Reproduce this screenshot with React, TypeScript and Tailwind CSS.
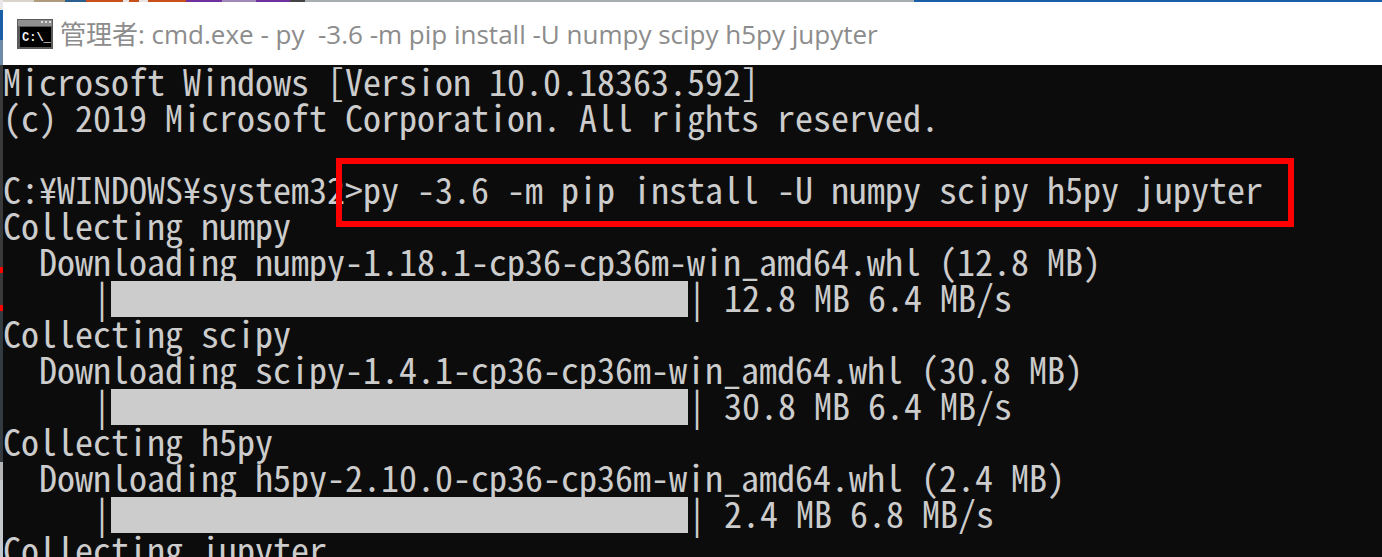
const lines = [
  { t: "Microsoft Windows [Version 10.0.18363.592]" },
  { t: "(c) 2019 Microsoft Corporation. All rights reserved." },
  { t: "" },
  { t: "C:¥WINDOWS¥system32>py -3.6 -m pip install -U numpy scipy h5py jupyter" },
  { t: "Collecting numpy" },
  { t: "  Downloading numpy-1.18.1-cp36-cp36m-win_amd64.whl (12.8 MB)" },
  { t: "     |", bar: "| 12.8 MB 6.4 MB/s" },
  { t: "Collecting scipy" },
  { t: "  Downloading scipy-1.4.1-cp36-cp36m-win_amd64.whl (30.8 MB)" },
  { t: "     |", bar: "| 30.8 MB 6.4 MB/s" },
  { t: "Collecting h5py" },
  { t: "  Downloading h5py-2.10.0-cp36-cp36m-win_amd64.whl (2.4 MB)" },
  { t: "     |", bar: "| 2.4 MB 6.8 MB/s" },
  { t: "Collecting jupyter" },
];

export default function App() {
  return (
    <div className="relative flex h-[557px] w-[1382px] flex-col overflow-hidden bg-[#0c0c0c]">
      {/* bit of desktop showing behind the window */}
      <div className="flex h-[2px] shrink-0">
        <div className="w-[34px] bg-[#d8d4cc]" />
        <div className="w-[31px] bg-[#b09a7c]" />
        <div className="w-[21px] bg-[#2a5f8f]" />
        <div className="w-[37px] bg-[#c8501c]" />
        <div className="w-[6px] bg-[#e8e4e0]" />
        <div className="w-[10px] bg-[#c8501c]" />
        <div className="w-[9px] bg-[#e8e4e0]" />
        <div className="w-[38px] bg-[#c8501c]" />
        <div className="w-[36px] bg-[#7030a0]" />
        <div className="w-[34px] bg-[#a088b8]" />
        <div className="w-[34px] bg-[#7030a0]" />
        <div className="w-[15px] bg-[#444444]" />
        <div className="w-[609px] bg-[#a8adb0]" />
        <div className="flex-1 bg-[#1b5ea8]" />
      </div>
      <div className="flex h-[63px] shrink-0 items-center gap-[7px] bg-white pl-[17px]">
        <svg width="36" height="30" viewBox="0 0 36 30">
          <rect width="36" height="30" fill="#5a5a5a" />
          <rect x="1" y="1" width="34" height="6" fill="#8f8f8f" />
          <rect x="24" y="2" width="2" height="2" fill="#dddddd" />
          <rect x="28" y="2" width="2" height="2" fill="#dddddd" />
          <rect x="32" y="2" width="2" height="2" fill="#dddddd" />
          <rect x="3" y="8" width="31" height="20" fill="#000" />
          <text x="5" y="22" fill="#eee" fontSize="12" fontFamily="Liberation Mono, monospace" fontWeight="700">C:\_</text>
        </svg>
        <span className="whitespace-pre pt-[1px] font-['Open_Sans','Noto_Sans_CJK_JP',sans-serif] text-[26px] text-[#8c8c8c]">管理者: cmd.exe - py  -3.6 -m pip install -U numpy scipy h5py jupyter</span>
      </div>
      <div className="whitespace-pre pl-[3px] font-['Noto_Sans_Mono_CJK_JP','Liberation_Mono',monospace] text-[36px] leading-[30px] text-[#cccccc]">
        {lines.map((l, i) => (
          <div key={i} className="flex h-[36px]">
            <span>{l.t}</span>
            {l.bar && <span className="h-[36px] w-[577px] bg-[#cccccc]" />}
            {l.bar && <span>{l.bar}</span>}
          </div>
        ))}
      </div>
      {/* left edge: whatever sits behind the window */}
      <div className="absolute left-0 top-0 flex h-full w-[3px] flex-col">
        <div className="h-[10px] bg-[#e8e8e8]" />
        <div className="h-[30px] bg-[#1b5ea8]" />
        <div className="h-[25px] bg-[#6d8aa8]" />
        <div className="h-[202px] bg-[#3a3a3a]" />
        <div className="h-[6px] bg-[#ff0000]" />
        <div className="h-[32px] bg-[#3a3a3a]" />
        <div className="h-[6px] bg-[#ff0000]" />
        <div className="h-[151px] bg-[#333a40]" />
        <div className="h-[18px] bg-[#b5b5b5]" />
        <div className="flex-1 bg-[#c2c8cc]" />
      </div>
      <div className="absolute left-[336px] top-[158px] h-[69px] w-[958px] border-[6px] border-[#ff0000]" />
    </div>
  );
}
